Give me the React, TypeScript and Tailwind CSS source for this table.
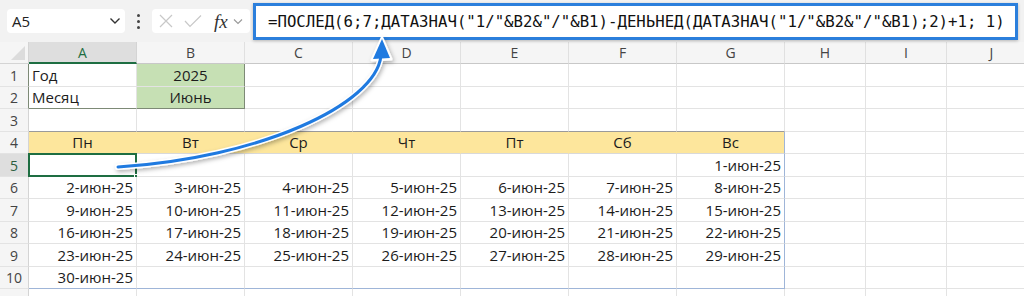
import React from "react";

const COLS = ["A", "B", "C", "D", "E", "F", "G", "H", "I", "J"];
const WIDTHS = [108, 108, 108, 108, 108, 108, 108, 81, 81, 90];
const HEIGHTS = [23, 22, 23, 22, 23, 22, 23, 22, 23, 22, 10];
const DAYS = ["Пн", "Вт", "Ср", "Чт", "Пт", "Сб", "Вс"];
const FORMULA =
  '=ПОСЛЕД(6;7;ДАТАЗНАЧ("1/"&B2&"/"&B1)-ДЕНЬНЕД(ДАТАЗНАЧ("1/"&B2&"/"&B1);2)+1; 1)';

// June 2025 starts on a Sunday
function dateAt(row: number, col: number): string {
  const n = (row - 5) * 7 + col - 5;
  if (n < 1 || n > 30) return "";
  return `${n}-июн-25`;
}

function cellText(row: number, col: number): { text: string; align: string } {
  if (row === 1 && col === 0) return { text: "Год", align: "justify-start pl-[3px]" };
  if (row === 2 && col === 0) return { text: "Месяц", align: "justify-start pl-[3px]" };
  if (row === 1 && col === 1) return { text: "2025", align: "justify-center" };
  if (row === 2 && col === 1) return { text: "Июнь", align: "justify-center" };
  if (row === 4 && col < 7) return { text: DAYS[col], align: "justify-center" };
  if (row >= 5 && col < 7) return { text: dateAt(row, col), align: "justify-end pr-[3px]" };
  return { text: "", align: "" };
}

function Cell({ row, col }: { row: number; col: number }) {
  const { text, align } = cellText(row, col);
  const inTable = row >= 4 && row <= 10 && col < 7;
  let bg = "bg-white";
  if (row >= 1 && row <= 2 && col === 1) bg = "bg-[#c6e0b4]";
  if (row === 4 && col < 7) bg = "bg-[#fde69c]";

  let right = "border-r-[#e3e3e3]";
  let bottom = "border-b-[#e3e3e3]";
  if (row <= 2 && col === 1) right = "border-r-[#7d8a76]";
  if (row === 2 && col <= 1) bottom = "border-b-[#7d8a76]";
  if (row === 3 && col < 7) bottom = "border-b-[#9a9a9a]";
  if (row === 4 && col < 7) bottom = "border-b-[#d9d9d9]";
  if (inTable && col === 6) right = "border-r-[#9fb5d8]";
  if (row === 10 && col < 7) bottom = "border-b-[#9fb5d8]";
  if (row === 4 && col < 6) right = "border-r-[#fde69c]";

  const selected = row === 5 && col === 0;

  return (
    <div
      className={`relative box-border flex shrink-0 items-center border-r border-b ${right} ${bottom} ${bg} ${align} text-[15px] text-[#1c1c1c]`}
      style={{ width: WIDTHS[col], height: HEIGHTS[row - 1] }}
    >
      {text}
      {selected && (
        <>
          <div className="absolute -top-px -left-px -right-px -bottom-px border-2 border-[#1e6e42]" />
          <div className="absolute -right-[4px] -bottom-[4px] h-[6px] w-[6px] border border-white bg-[#1e6e42]" />
        </>
      )}
    </div>
  );
}

function Row({ row }: { row: number }) {
  const sel = row === 5;
  const darkLeft = row <= 2;
  return (
    <div className="flex">
      <div
        className={`box-border flex w-[29px] shrink-0 items-center justify-center border-r border-b border-b-[#e3e3e3] text-[14px] ${
          darkLeft ? "border-r-[#7d8a76]" : "border-r-[#d4d4d4]"
        } ${sel ? "bg-[#dedede] text-[#2b5d3f]" : "bg-[#f5f5f5] text-[#444]"}`}
        style={{ height: HEIGHTS[row - 1] }}
      >
        {row <= 10 ? row : ""}
      </div>
      {COLS.map((_, c) => (
        <Cell key={c} row={row} col={c} />
      ))}
    </div>
  );
}

function Arrow() {
  const d = "M118,167 C260,158 375,105 381,56";
  return (
    <svg className="pointer-events-none absolute left-0 top-0" width="1024" height="296">
      <defs>
        <filter id="sh" x="-20%" y="-20%" width="140%" height="140%">
          <feDropShadow dx="1.5" dy="2" stdDeviation="2" floodColor="#000" floodOpacity="0.3" />
        </filter>
      </defs>
      <g filter="url(#sh)">
        <path d={d} fill="none" stroke="#fff" strokeWidth="6" strokeLinecap="round" />
        <path d="M382,38 L372,60 L391,59 Z" fill="#fff" stroke="#fff" strokeWidth="3" strokeLinejoin="round" />
      </g>
      <path d={d} fill="none" stroke="#1f7ae0" strokeWidth="3" strokeLinecap="round" />
      <path d="M382,39 L373,59 L390,58 Z" fill="#1f7ae0" />
    </svg>
  );
}

function Toolbar() {
  return (
    <div className="relative flex h-[42px] items-center bg-[#f2f2f2] pl-[7px]">
      <div className="flex h-[24px] w-[118px] items-center justify-between rounded-[4px] bg-white pl-[5px] pr-[4px] text-[15px] text-[#222]">
        <span>A5</span>
        <svg width="12" height="8" viewBox="0 0 12 8">
          <path d="M1.5,1.5 L6,6 L10.5,1.5" fill="none" stroke="#333" strokeWidth="1.4" />
        </svg>
      </div>
      <div className="flex w-[27px] flex-col items-center gap-[3px]">
        <div className="h-[3px] w-[3px] rounded-full bg-[#444]" />
        <div className="h-[3px] w-[3px] rounded-full bg-[#444]" />
        <div className="h-[3px] w-[3px] rounded-full bg-[#444]" />
      </div>
      <div className="flex h-[24px] w-[98px] items-center rounded-[4px] bg-white pl-[6px]">
        <svg width="16" height="16" viewBox="0 0 16 16">
          <path d="M2,2 L14,14 M14,2 L2,14" stroke="#c8c8c8" strokeWidth="1.2" />
        </svg>
        <svg className="ml-[10px]" width="18" height="14" viewBox="0 0 18 14">
          <path d="M1,7 L6,12.5 L17,1.5" fill="none" stroke="#c8c8c8" strokeWidth="1.2" />
        </svg>
        <span
          className="ml-[12px] text-[19px] italic leading-none text-[#333]"
          style={{ fontFamily: '"Liberation Serif", serif' }}
        >
          fx
        </span>
        <svg className="ml-[5px]" width="10" height="7" viewBox="0 0 10 7">
          <path d="M1,1.5 L5,5.5 L9,1.5" fill="none" stroke="#999" strokeWidth="1.1" />
        </svg>
      </div>
      <div className="absolute left-[253px] top-[3px] box-border flex h-[37px] w-[765px] items-center border-[3px] border-[#2b7fdc] bg-white pl-[12px] shadow-[0_1px_3px_rgba(0,0,0,0.25)]">
        <span
          className="whitespace-nowrap text-[15.7px] text-[#111]"
          style={{ fontFamily: '"DejaVu Sans Mono", monospace' }}
        >
          {FORMULA}
        </span>
      </div>
    </div>
  );
}

function ColHeader() {
  return (
    <div className="flex h-[22px]">
      <div className="relative box-border h-[22px] w-[29px] shrink-0 border-r border-b border-[#d4d4d4] bg-[#f5f5f5]">
        <svg className="absolute bottom-[3px] right-[3px]" width="14" height="14" viewBox="0 0 14 14">
          <path d="M14,0 L14,14 L0,14 Z" fill="#dcdcdc" />
        </svg>
      </div>
      {COLS.map((c, i) => (
        <div
          key={c}
          className={`box-border flex h-[22px] shrink-0 items-center justify-center border-r text-[14px] ${
            i === 0
              ? "border-b-2 border-r-[#d4d4d4] border-b-[#1e6e42] bg-[#dedede] text-[#1e6e42]"
              : "border-b border-r-[#e0e0e0] border-b-[#c8c8c8] bg-[#f5f5f5] text-[#444]"
          }`}
          style={{ width: WIDTHS[i] }}
        >
          {c}
        </div>
      ))}
    </div>
  );
}

export default function App() {
  return (
    <div
      className="relative h-[296px] w-[1024px] overflow-hidden bg-white"
      style={{ fontFamily: '"Open Sans", "Noto Sans", sans-serif' }}
    >
      <Toolbar />
      <ColHeader />
      {Array.from({ length: 11 }, (_, i) => (
        <Row key={i} row={i + 1} />
      ))}
      <Arrow />
    </div>
  );
}
